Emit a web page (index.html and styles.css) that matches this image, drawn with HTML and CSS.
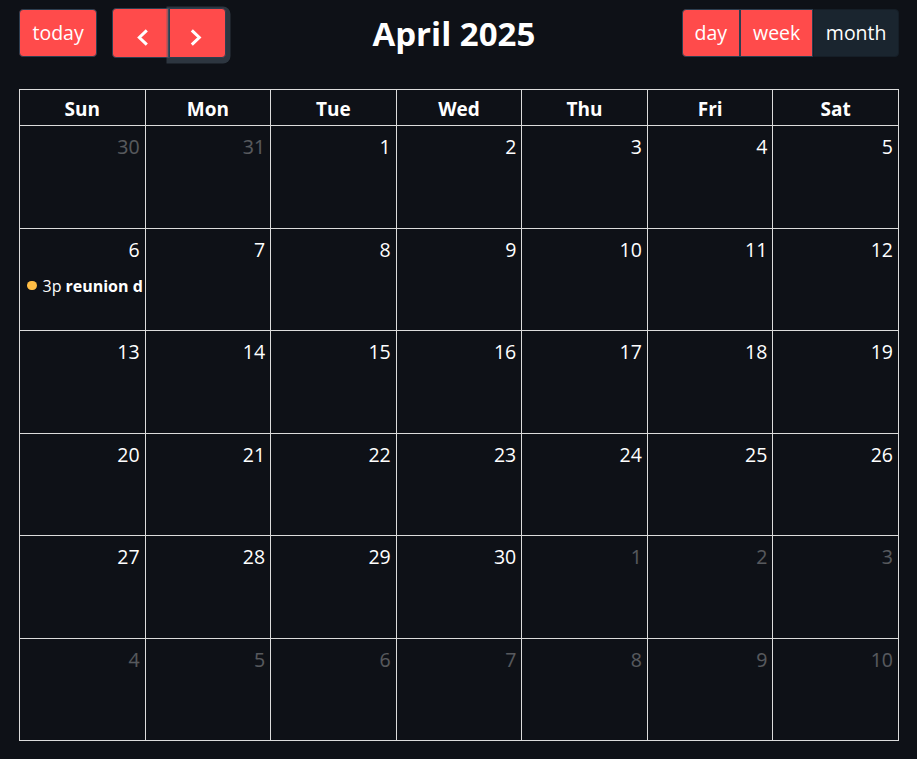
FILE: index.html
```html
<!DOCTYPE html>
<html lang="en">
<head>
<meta charset="utf-8">
<title>April 2025</title>
<link rel="stylesheet" href="styles.css">
</head>
<body>
<div class="calendar">
  <div class="toolbar">
    <div class="chunk">
      <button class="btn">today</button>
      <div class="btn-group">
        <button class="btn icon-btn" aria-label="prev">
          <svg width="30" height="30" viewBox="0 0 30 30"><path d="M21.8 12.3 L14.3 19.5 L21.8 26.7" fill="none" stroke="#fff" stroke-width="3"/></svg>
        </button>
        <button class="btn icon-btn focused" aria-label="next">
          <svg width="30" height="30" viewBox="0 0 30 30"><path d="M9.8 12.3 L17.3 19.5 L9.8 26.7" fill="none" stroke="#fff" stroke-width="3"/></svg>
        </button>
      </div>
    </div>
    <h2 class="title">April 2025</h2>
    <div class="chunk">
      <div class="btn-group views">
        <button class="btn">day</button>
        <button class="btn">week</button>
        <button class="btn active">month</button>
      </div>
    </div>
  </div>

  <div class="grid head-row">
    <div class="head">Sun</div><div class="head">Mon</div><div class="head">Tue</div><div class="head">Wed</div><div class="head">Thu</div><div class="head">Fri</div><div class="head">Sat</div>
  </div>
  <div class="grid body">
    <div class="day other"><span class="num">30</span></div>
    <div class="day other"><span class="num">31</span></div>
    <div class="day"><span class="num">1</span></div>
    <div class="day"><span class="num">2</span></div>
    <div class="day"><span class="num">3</span></div>
    <div class="day"><span class="num">4</span></div>
    <div class="day"><span class="num">5</span></div>

    <div class="day"><span class="num">6</span>
      <div class="event"><span class="dot"></span><span class="time">3p</span><span class="ev-title">reunion d</span></div>
    </div>
    <div class="day"><span class="num">7</span></div>
    <div class="day"><span class="num">8</span></div>
    <div class="day"><span class="num">9</span></div>
    <div class="day"><span class="num">10</span></div>
    <div class="day"><span class="num">11</span></div>
    <div class="day"><span class="num">12</span></div>

    <div class="day"><span class="num">13</span></div>
    <div class="day"><span class="num">14</span></div>
    <div class="day"><span class="num">15</span></div>
    <div class="day"><span class="num">16</span></div>
    <div class="day"><span class="num">17</span></div>
    <div class="day"><span class="num">18</span></div>
    <div class="day"><span class="num">19</span></div>

    <div class="day"><span class="num">20</span></div>
    <div class="day"><span class="num">21</span></div>
    <div class="day"><span class="num">22</span></div>
    <div class="day"><span class="num">23</span></div>
    <div class="day"><span class="num">24</span></div>
    <div class="day"><span class="num">25</span></div>
    <div class="day"><span class="num">26</span></div>

    <div class="day"><span class="num">27</span></div>
    <div class="day"><span class="num">28</span></div>
    <div class="day"><span class="num">29</span></div>
    <div class="day"><span class="num">30</span></div>
    <div class="day other"><span class="num">1</span></div>
    <div class="day other"><span class="num">2</span></div>
    <div class="day other"><span class="num">3</span></div>

    <div class="day other"><span class="num">4</span></div>
    <div class="day other"><span class="num">5</span></div>
    <div class="day other"><span class="num">6</span></div>
    <div class="day other"><span class="num">7</span></div>
    <div class="day other"><span class="num">8</span></div>
    <div class="day other"><span class="num">9</span></div>
    <div class="day other"><span class="num">10</span></div>
  </div>
</div>
</body>
</html>
```

FILE: styles.css
```css
html, body {
  margin: 0;
  padding: 0;
  background: #0e1117;
}

body {
  font-family: "Open Sans", "Noto Sans", sans-serif;
  color: #fafafa;
}

.calendar {
  padding: 8px 18px 0 19px;
}

.toolbar {
  display: flex;
  justify-content: space-between;
  align-items: center;
  height: 50px;
  margin-bottom: 31px;
}

.chunk {
  display: flex;
  align-items: center;
  gap: 15px;
}

.title {
  margin: 2px 0 0 0;
  font-size: 33px;
  font-weight: 700;
  line-height: 1.2;
  color: #ffffff;
}

.btn-group {
  display: flex;
}

.btn {
  font-family: inherit;
  font-size: 19.5px;
  line-height: 1.5;
  color: #ffffff;
  background: #ff4b4b;
  border: 1px solid #2c3e50;
  border-radius: 4px;
  padding: 8px 12.5px;
  margin: 0;
  cursor: pointer;
}

.views .btn {
  padding-left: 12px;
  padding-right: 12px;
}

.views .btn.active {
  padding-left: 11.5px;
  padding-right: 11.5px;
}

.btn-group .btn {
  border-radius: 0;
}

.btn-group .btn:first-child {
  border-radius: 4px 0 0 4px;
}

.btn-group .btn:last-child {
  border-radius: 0 4px 4px 0;
}

.btn.active {
  background: #1a252f;
  border-color: #151e27;
}

.icon-btn {
  height: 50px;
  width: 56.5px;
  padding: 0;
  display: flex;
  align-items: center;
  justify-content: center;
}

.icon-btn svg {
  display: block;
  flex: none;
}

.icon-btn.focused {
  position: relative;
  z-index: 1;
  width: 57.5px;
  box-shadow: 1px 2px 0 3.5px rgba(76, 91, 106, 0.5);
}

.grid {
  display: grid;
  grid-template-columns: repeat(7, 1fr);
  border-left: 1px solid #dcdcdc;
}

.head-row {
  border-top: 1px solid #dcdcdc;
}

.head {
  box-sizing: border-box;
  height: 36px;
  padding-top: 3px;
  border-right: 1px solid #dcdcdc;
  border-bottom: 1px solid #dcdcdc;
  display: flex;
  align-items: center;
  justify-content: center;
  font-size: 19px;
  font-weight: 700;
  color: #ffffff;
}

.body {
  grid-template-rows: repeat(6, 102.5px);
}

.day {
  border-right: 1px solid #dcdcdc;
  border-bottom: 1px solid #dcdcdc;
  display: flex;
  flex-direction: column;
  overflow: hidden;
  min-width: 0;
}

.num {
  align-self: flex-end;
  padding: 7px 5px 0 0;
  font-size: 19.5px;
  line-height: 28px;
  color: #ffffff;
}

.other .num {
  opacity: 0.3;
}

.event {
  display: flex;
  align-items: center;
  white-space: nowrap;
  margin: 12px 0 0 7px;
  font-size: 16px;
  line-height: 20px;
  color: #ffffff;
}

.dot {
  flex: none;
  width: 9.5px;
  height: 9.5px;
  border-radius: 50%;
  background: #ffbd45;
  margin-right: 6px;
}

.time {
  margin-right: 4px;
}

.ev-title {
  font-weight: 700;
}
```
